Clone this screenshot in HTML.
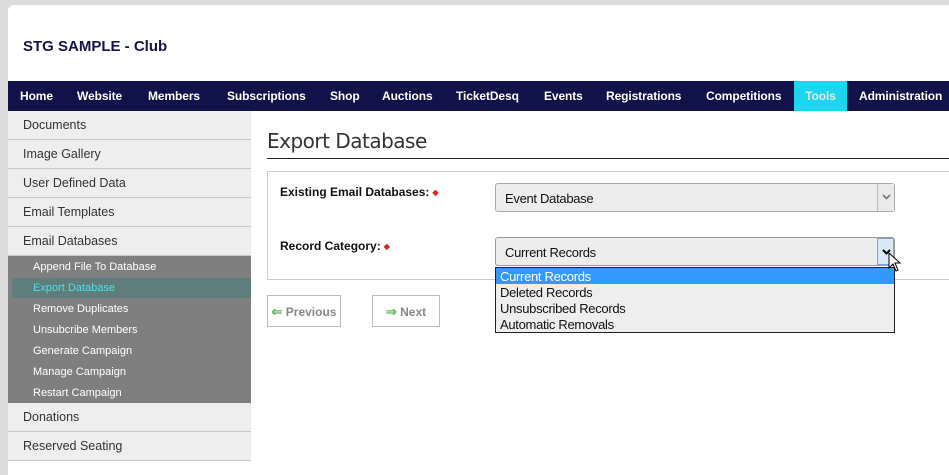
<!DOCTYPE html>
<html><head><meta charset="utf-8">
<style>
*{margin:0;padding:0;box-sizing:border-box}
body{width:949px;height:464px;overflow:hidden;background:#dcdcdc;font-family:"Liberation Sans",Arial,sans-serif;position:relative}
.abs{position:absolute}
#panel{left:8px;top:5px;width:960px;height:470px;background:#fff;border-top-left-radius:6px}
#title{left:23px;top:38px;font-size:15px;font-weight:bold;color:#14144a}
#nav{left:8px;top:81px;width:941px;height:30px;background:#12124a}
.ni{position:absolute;top:0;height:30px;line-height:30px;color:#fff;font-weight:bold;font-size:12px;white-space:nowrap;letter-spacing:-0.1px}
#tools{left:786px;width:53px;background:#1ad6ef;color:#e6e6e6;text-align:center}
.si{position:absolute;left:8px;width:243px;height:29px;background:#eeeeee;border-bottom:1px solid #c8c8c8;font-size:12.5px;color:#333;padding-left:15px;line-height:29px}
#sub{left:8px;top:256px;width:243px;height:147px;background:#7f7f7f}
.sb{position:absolute;left:33px;font-size:11px;color:#fff;line-height:21px}
#sel{left:12px;top:278px;width:239px;height:20px;background:#5f7d7a}
h1{position:absolute;left:267px;top:129px;font-weight:normal;font-size:20px;color:#333;font-family:"DejaVu Sans","Liberation Sans",sans-serif;letter-spacing:-0.5px}
#hl{left:267px;top:158px;width:682px;height:1px;background:#222}
#box{left:267px;top:171px;width:700px;height:109px;border:1px solid #ccc;border-right:none}
.lb{position:absolute;left:280px;font-size:12px;font-weight:bold;color:#111}
.dot{color:#e0262b;font-size:8px;vertical-align:1px;margin-left:3px}
.select{position:absolute;left:495px;width:400px;height:29px;background:#ededed;border:1px solid #aaa;border-radius:3px;font-size:13px;color:#111;padding-left:9px;line-height:29px;letter-spacing:-0.3px}
.arr{position:absolute;right:0;top:0;width:17px;height:27px;border-left:1px solid #bbb;background:#eaeaea}
.arr svg{position:absolute;left:4px;top:10px}
#list{left:495px;top:267px;width:400px;height:66px;background:#eeeeee;border:1px solid #222;font-size:13px;color:#111;letter-spacing:-0.3px}
#list div{height:16px;line-height:17px;padding-left:4px}
.btn{position:absolute;top:295px;height:32px;border:1px solid #bbb;background:#fff;font-size:12px;font-weight:bold;color:#888;line-height:32px;text-align:center}
.btn b{color:#5fb75a;font-size:13px}
</style></head><body>
<div id="panel" class="abs"></div>
<div id="title" class="abs">STG SAMPLE - Club</div>
<div id="nav" class="abs">
<span class="ni" style="left:12px">Home</span>
<span class="ni" style="left:69px">Website</span>
<span class="ni" style="left:140px">Members</span>
<span class="ni" style="left:219px">Subscriptions</span>
<span class="ni" style="left:322px">Shop</span>
<span class="ni" style="left:374px">Auctions</span>
<span class="ni" style="left:448px">TicketDesq</span>
<span class="ni" style="left:536px">Events</span>
<span class="ni" style="left:598px">Registrations</span>
<span class="ni" style="left:698px">Competitions</span>
<span class="ni" id="tools">Tools</span>
<span class="ni" style="left:851px">Administration</span>
</div>
<div class="si" style="top:111px">Documents</div>
<div class="si" style="top:140px">Image Gallery</div>
<div class="si" style="top:169px">User Defined Data</div>
<div class="si" style="top:198px">Email Templates</div>
<div class="si" style="top:227px">Email Databases</div>
<div id="sub" class="abs"></div>
<div id="sel" class="abs"></div>
<div class="sb" style="top:257px">Append File To Database</div>
<div class="sb" style="top:278px;color:#4fe0e8">Export Database</div>
<div class="sb" style="top:299px">Remove Duplicates</div>
<div class="sb" style="top:320px">Unsubcribe Members</div>
<div class="sb" style="top:341px">Generate Campaign</div>
<div class="sb" style="top:362px">Manage Campaign</div>
<div class="sb" style="top:383px">Restart Campaign</div>
<div class="si" style="top:403px">Donations</div>
<div class="si" style="top:432px">Reserved Seating</div>
<h1>Export Database</h1>
<div id="hl" class="abs"></div>
<div id="box" class="abs"></div>
<div class="lb" style="top:185px">Existing Email Databases:<span class="dot">◆</span></div>
<div class="lb" style="top:239px">Record Category:<span class="dot">◆</span></div>
<div class="select" style="top:183px">Event Database<div class="arr"><svg width="9" height="6" viewBox="0 0 9 6"><path d="M1 1 L4.5 4.5 L8 1" fill="none" stroke="#777" stroke-width="1.6"/></svg></div></div>
<div class="select" style="top:237px;border-color:#999">Current Records<div class="arr" style="background:#dbe8f5;border:1px solid #7aa7d6"><svg width="9" height="6" viewBox="0 0 9 6"><path d="M1 1 L4.5 4.5 L8 1" fill="none" stroke="#000" stroke-width="2"/></svg></div></div>
<div id="list" class="abs">
<div style="background:#3399ff;color:#fff">Current Records</div>
<div>Deleted Records</div>
<div>Unsubscribed Records</div>
<div>Automatic Removals</div>
</div>
<svg class="abs" style="left:888px;top:252px" width="16" height="22" viewBox="0 0 16 22"><path d="M1 1 L1 16 L5 12 L8 19 L10 18 L7 11 L12 11 Z" fill="#fff" stroke="#000" stroke-width="1"/></svg>
<div class="btn" style="left:267px;width:74px"><b>⇐</b> Previous</div>
<div class="btn" style="left:372px;width:68px"><b>⇒</b> Next</div>
</body></html>
